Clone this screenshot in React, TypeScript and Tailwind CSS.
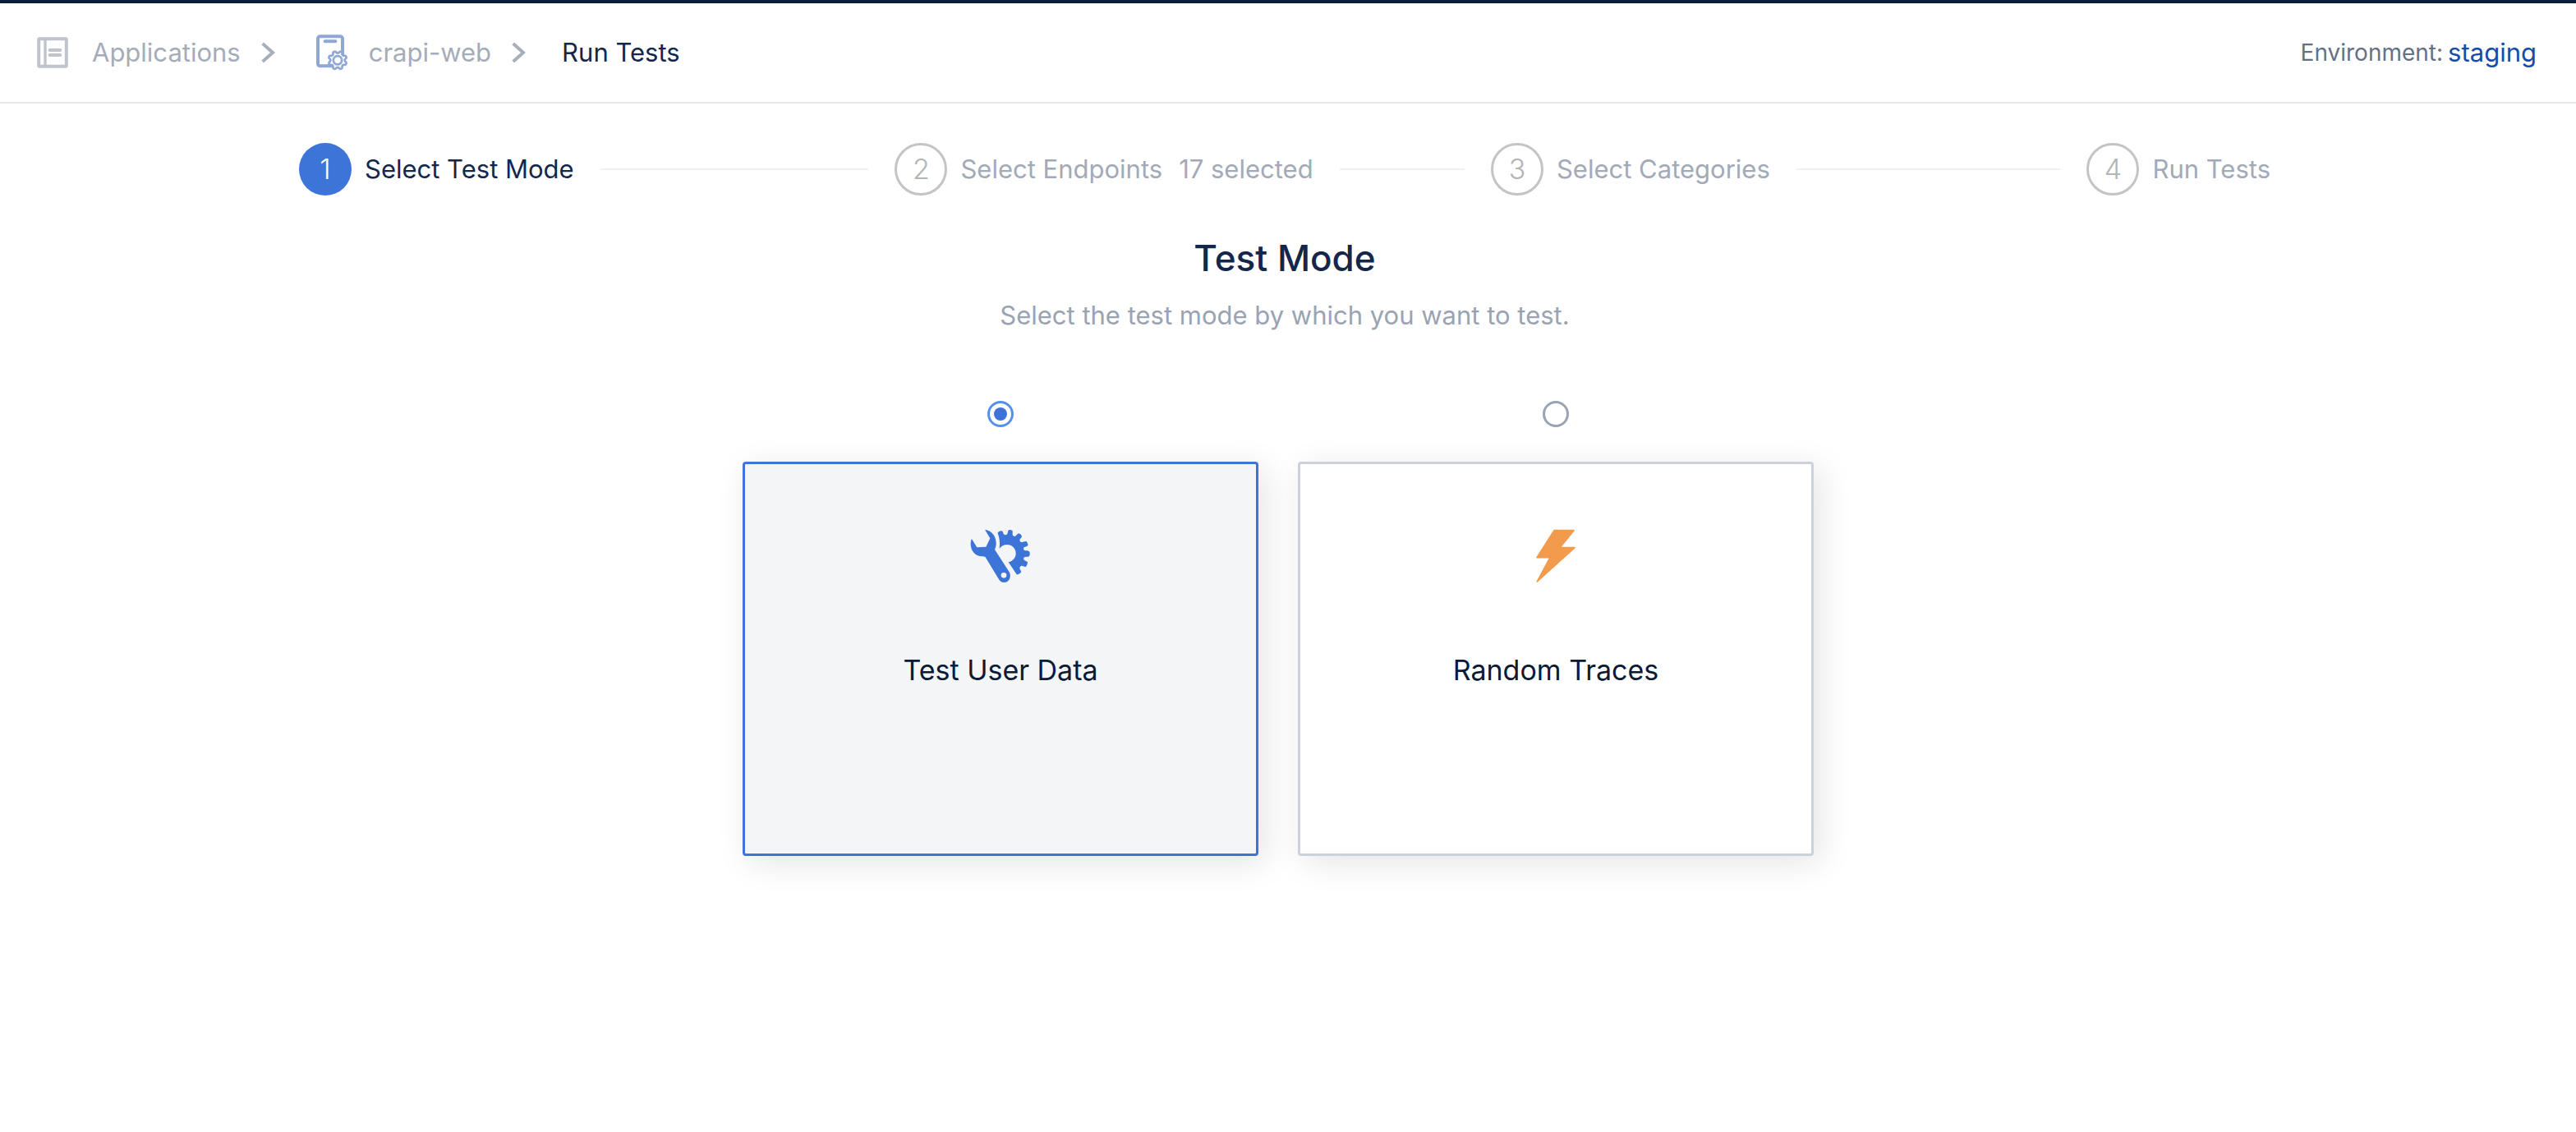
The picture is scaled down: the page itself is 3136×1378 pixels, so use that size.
import { useState } from "react";
import type { ReactNode } from "react";

function ApplicationsIcon() {
  return (
    <svg className="size-10 shrink-0" viewBox="132 132 120 120" fill="none" stroke="#bec3cd" aria-hidden="true">
      <rect x="141.500" y="141.500" width="101" height="101" rx="3" strokeWidth="12" />
      <path d="M165 141V243" strokeWidth="10" />
      <path d="M182 183H220M182 201H220" strokeWidth="12" strokeLinecap="round" />
    </svg>
  );
}

/* Outline of an eight-toothed gear with rounded teeth. */
function gearPath(cx: number, cy: number, mid: number, swing: number) {
  const points: string[] = [];
  for (let i = 0; i < 160; i++) {
    const a = (i / 160) * Math.PI * 2;
    const wave = Math.cos(8 * (a - Math.PI / 8));
    const r = mid + swing * Math.tanh(1.6 * wave);
    points.push(`${(cx + r * Math.cos(a)).toFixed(2)} ${(cy + r * Math.sin(a)).toFixed(2)}`);
  }
  return `M${points.join("L")}Z`;
}

const GEAR = gearPath(1236, 225, 30, 4);

function ServiceIcon() {
  return (
    <svg className="h-[46px] w-[42px] shrink-0" viewBox="1152 128 126 138" fill="none" stroke="#8fa6d6" aria-hidden="true">
      <rect x="1164" y="138" width="90" height="108" rx="8" strokeWidth="12" />
      <path d="M1190 156H1228" strokeWidth="12" strokeLinecap="round" />
      <path d={GEAR} fill="#fff" strokeWidth="8" strokeLinejoin="round" />
      <circle cx="1236" cy="225" r="15.500" strokeWidth="8" />
    </svg>
  );
}

function Chevron() {
  return (
    <svg className="h-[26px] w-[18px] shrink-0" viewBox="956 153 54 78" fill="none" stroke="#a8afbb" aria-hidden="true">
      <path d="M964 159L1001 192L964 225" strokeWidth="12" />
    </svg>
  );
}

function ToolsIcon() {
  return (
    <svg className="h-[66px] w-[74px]" viewBox="124 132 222 198" fill="#3d74d8" aria-hidden="true">
      <path
        fillRule="evenodd"
        d="M178 134C203 137 219 158 219 184C219 193 217 201 214 207L267 289C271 296 272 306 268 314C264 322 257 327 248 327C240 327 234 323 230 317L180 235C176 232 173 232 168 232C145 231 127 214 126 188C126 180 127 173 130 168L149 199L182 197L197 166ZM247 291A10 10 0 1 0 247 311A10 10 0 1 0 247 291Z"
      />
      <path d="M225 147C225 142 235 138 240 139C245 141 244 150 249 153L257 153C263 150 260 138 266 135C271 134 277 136 279 139C280 145 277 153 281 157L287 159C293 158 295 150 301 148C307 149 312 154 313 159C312 165 304 168 305 174L309 180C315 182 323 175 329 177C333 180 336 187 335 192C332 197 322 196 319 201L320 208C325 213 334 209 340 214C343 219 343 226 340 231C335 235 326 232 320 236L319 242C322 248 331 248 334 253C334 259 331 267 327 270C321 271 315 265 309 267L305 273C304 279 312 284 310 290C306 295 300 298 294 298L264 253C280 249 291 237 291 221C291 203 277 189 259 189C247 189 238 194 231 203C234 182 231 164 225 147Z" />
    </svg>
  );
}

function BoltIcon() {
  return (
    <svg className="h-[66px] w-[50px]" viewBox="147 132 150 198" fill="#f29b4c" stroke="#f29b4c" aria-hidden="true">
      <path d="M216 137H288L237 200H291L154 324L201 236H153Z" strokeWidth="5" strokeLinejoin="round" />
    </svg>
  );
}

type Step = { title: string; note?: string };

const steps: Step[] = [
  { title: "Select Test Mode" },
  { title: "Select Endpoints", note: "17 selected" },
  { title: "Select Categories" },
  { title: "Run Tests" },
];

function Steps({ current }: { current: number }) {
  return (
    <ol className="flex w-full max-w-[2400px] gap-8">
      {steps.map((step, i) => {
        const active = i === current;
        const last = i === steps.length - 1;
        return (
          <li
            key={step.title}
            aria-current={active ? "step" : undefined}
            className={last ? "flex flex-none items-center" : "flex flex-1 items-center"}
          >
            <span
              className={
                active
                  ? "mr-4 flex size-16 shrink-0 items-center justify-center rounded-full bg-[#3d74d8] text-[34px] font-light text-white"
                  : "mr-4 flex size-16 shrink-0 items-center justify-center rounded-full border-3 border-[#c4c4c4] text-[34px] font-light text-[#b4b4b4]"
              }
            >
              {i + 1}
            </span>
            <span className={active ? "whitespace-nowrap text-[#14274b]" : "whitespace-nowrap text-[#a2aab8]"}>
              {step.title}
              {step.note && <span className="ml-5">{step.note}</span>}
            </span>
            {!last && <span className="ml-8 h-0.5 flex-1 bg-[#f0f0f0]" />}
          </li>
        );
      })}
    </ol>
  );
}

type ModeProps = {
  value: string;
  label: string;
  icon: ReactNode;
  selected: boolean;
  onSelect: (value: string) => void;
};

function ModeOption({ value, label, icon, selected, onSelect }: ModeProps) {
  return (
    <label className="flex cursor-pointer flex-col items-center gap-[42px]">
      <input
        type="radio"
        name="mode"
        value={value}
        checked={selected}
        onChange={() => onSelect(value)}
        className="flex size-8 appearance-none items-center justify-center rounded-full border-3 border-[#9aa3b3] bg-white before:size-4 before:rounded-full checked:border-[#5590ec] checked:before:bg-[#3d74d8]"
      />
      <span
        className={
          selected
            ? "flex min-h-[480px] w-full flex-col items-center gap-[82px] rounded-sm border-3 border-[#3d74d8] bg-[#f3f5f7] pt-[79px] shadow-[8px_8px_40px_rgba(0,0,0,0.11)]"
            : "flex min-h-[480px] w-full flex-col items-center gap-[82px] rounded-sm border-3 border-[#cbd2de] bg-white pt-[79px] shadow-[8px_8px_40px_rgba(0,0,0,0.11)]"
        }
      >
        {icon}
        <span className="text-[34px] leading-12 text-[#0b1a36]">{label}</span>
      </span>
    </label>
  );
}

export default function App() {
  const [mode, setMode] = useState("user-data");

  return (
    <div className="min-h-screen border-t-4 border-[#0a1b40] bg-white font-['Inter',sans-serif] text-[31px] leading-12">
      <header className="flex items-center justify-between border-b-2 border-[#e7e8ee] pr-12 pl-11">
        <nav aria-label="Breadcrumb" className="flex h-[120px] items-center text-[#a5acb9]">
          <a href="#applications" className="flex items-center gap-7">
            <ApplicationsIcon />
            Applications
          </a>
          <span className="mr-12 ml-6">
            <Chevron />
          </span>
          <a href="#crapi-web" className="flex items-center gap-6">
            <ServiceIcon />
            crapi-web
          </a>
          <span className="mr-11 ml-6">
            <Chevron />
          </span>
          <span aria-current="page" className="text-[#14274b]">
            Run Tests
          </span>
        </nav>
        <p className="flex items-center gap-1.5 text-[#667085]">
          <span className="text-[28px]">Environment:</span>
          <a href="#staging" className="text-[#174ca8]">
            staging
          </a>
        </p>
      </header>

      <main className="flex flex-col items-center px-8 pt-12 pr-10">
        <Steps current={0} />
        <h1 className="mt-12 text-[44px] leading-14 font-medium text-[#14274b]">Test Mode</h1>
        <p className="mt-[18px] text-[#9aa3b2]">Select the test mode by which you want to test.</p>
        <fieldset aria-label="Test mode" className="mt-20 w-full max-w-[1320px] pr-4 pb-20">
          <div className="grid grid-cols-2 gap-12">
            <ModeOption
              value="user-data"
              label="Test User Data"
              icon={<ToolsIcon />}
              selected={mode === "user-data"}
              onSelect={setMode}
            />
            <ModeOption
              value="random-traces"
              label="Random Traces"
              icon={<BoltIcon />}
              selected={mode === "random-traces"}
              onSelect={setMode}
            />
          </div>
        </fieldset>
      </main>
    </div>
  );
}
